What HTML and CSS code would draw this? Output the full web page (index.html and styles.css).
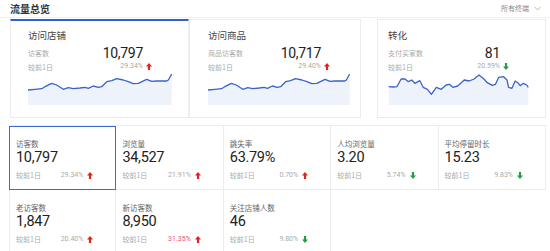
FILE: index.html
```html
<!DOCTYPE html>
<html lang="zh-CN">
<head>
    <meta charset="UTF-8">
    <meta name="viewport" content="width=device-width, initial-scale=1.0">
    <title>流量总览</title>
    <link rel="stylesheet" href="styles.css">
</head>
<body>
    <div class="head">
        <h2 class="head-title">流量总览</h2>
        <span class="head-filter">所有终端
            <svg class="caret" width="7" height="5" viewBox="0 0 7 5"><polyline points="0.5,0.8 3.5,4 6.5,0.8" fill="none" stroke="#bbb" stroke-width="1"/></svg>
        </span>
    </div>

    <div class="overview">
        <div class="card card-first">
            <div class="card-title">访问店铺</div>
            <div class="card-row">
                <span class="card-label">访客数</span>
                <span class="card-value">10,797</span>
                <span class="card-icon"></span>
            </div>
            <div class="card-row card-row-small">
                <span class="card-label">较前1日</span>
                <span class="card-rate">29.34%</span>
                <span class="card-icon"><svg width="6" height="7" viewBox="0 0 6 7"><path d="M3 0L6 3.5H4.1V7H1.9V3.5H0Z" fill="#e2231a"/></svg></span>
            </div>
            <svg class="spark" viewBox="0 0 144 33" preserveAspectRatio="none">
                <path d="M0 18L7 17.3L13.7 16.7L17 14.7L23.7 11.3L28.7 13L35.3 17.3L40.3 15.7L45.3 16.7L52 16L57 15.3L60.3 16.3L65.3 14L70.3 15.3L73.7 14.7L78.7 9.7L83.7 8.7L88.7 6.7L95.3 8L100.3 9.7L105.3 11.7L110.3 11.3L118.7 7.3L123.7 9.3L128.7 9L138.7 9L140.3 8L143.7 2V33H0Z" fill="#eef2fb"/>
                <polyline points="0,18 7,17.3 13.7,16.7 17,14.7 23.7,11.3 28.7,13 35.3,17.3 40.3,15.7 45.3,16.7 52,16 57,15.3 60.3,16.3 65.3,14 70.3,15.3 73.7,14.7 78.7,9.7 83.7,8.7 88.7,6.7 95.3,8 100.3,9.7 105.3,11.7 110.3,11.3 118.7,7.3 123.7,9.3 128.7,9 138.7,9 140.3,8 143.7,2" fill="none" stroke="#3a62c9" stroke-width="1.3" stroke-linejoin="round"/>
            </svg>
        </div>

        <div class="card card-second">
            <div class="card-title">访问商品</div>
            <div class="card-row">
                <span class="card-label">商品访客数</span>
                <span class="card-value">10,717</span>
                <span class="card-icon"></span>
            </div>
            <div class="card-row card-row-small">
                <span class="card-label">较前1日</span>
                <span class="card-rate">29.40%</span>
                <span class="card-icon"><svg width="6" height="7" viewBox="0 0 6 7"><path d="M3 0L6 3.5H4.1V7H1.9V3.5H0Z" fill="#e2231a"/></svg></span>
            </div>
            <svg class="spark" viewBox="0 0 144 33" preserveAspectRatio="none">
                <path d="M0 18L7 17.3L13.7 16.7L17 14.7L23.7 11.3L28.7 13L35.3 17.3L40.3 15.7L45.3 16.7L52 16L57 15.3L60.3 16.3L65.3 14L70.3 15.3L73.7 14.7L78.7 9.7L83.7 8.7L88.7 6.7L95.3 8L100.3 9.7L105.3 11.7L110.3 11.3L118.7 7.3L123.7 9.3L128.7 9L138.7 9L140.3 8L143.7 2V33H0Z" fill="#eef2fb"/>
                <polyline points="0,18 7,17.3 13.7,16.7 17,14.7 23.7,11.3 28.7,13 35.3,17.3 40.3,15.7 45.3,16.7 52,16 57,15.3 60.3,16.3 65.3,14 70.3,15.3 73.7,14.7 78.7,9.7 83.7,8.7 88.7,6.7 95.3,8 100.3,9.7 105.3,11.7 110.3,11.3 118.7,7.3 123.7,9.3 128.7,9 138.7,9 140.3,8 143.7,2" fill="none" stroke="#3a62c9" stroke-width="1.3" stroke-linejoin="round"/>
            </svg>
        </div>

        <div class="card card-third">
            <div class="card-title">转化</div>
            <div class="card-row">
                <span class="card-label">支付买家数</span>
                <span class="card-value">81</span>
                <span class="card-icon"></span>
            </div>
            <div class="card-row card-row-small">
                <span class="card-label">较前1日</span>
                <span class="card-rate">20.59%</span>
                <span class="card-icon"><svg width="6" height="7" viewBox="0 0 6 7"><path d="M3 7L6 3.5H4.1V0H1.9V3.5H0Z" fill="#2a9a48"/></svg></span>
            </div>
            <svg class="spark" viewBox="0 0 143 33" preserveAspectRatio="none">
                <path d="M0.7 14.7L5.7 15L9 14.7L13.3 7L17.3 7L20.7 9.7L24 8L27.3 11.3L32.3 8.7L35.7 15.3L40 17.3L44 22.3L49 15.3L54 17.3L59 13L62.3 12.3L65.7 15.3L70.7 14L77.3 8L82.3 9L87.3 7L92.3 3L97.3 7L100.7 10.7L105.7 13.3L109 12.3L112.3 5.3L117.3 4.7L120.7 8L122.3 15.3L125.7 16.3L129 9L132.3 11.3L134 13.7L137.3 11.3L140.7 13L142.3 15.3V33H0.7Z" fill="#eef2fb"/>
                <polyline points="0.7,14.7 5.7,15 9,14.7 13.3,7 17.3,7 20.7,9.7 24,8 27.3,11.3 32.3,8.7 35.7,15.3 40,17.3 44,22.3 49,15.3 54,17.3 59,13 62.3,12.3 65.7,15.3 70.7,14 77.3,8 82.3,9 87.3,7 92.3,3 97.3,7 100.7,10.7 105.7,13.3 109,12.3 112.3,5.3 117.3,4.7 120.7,8 122.3,15.3 125.7,16.3 129,9 132.3,11.3 134,13.7 137.3,11.3 140.7,13 142.3,15.3" fill="none" stroke="#3a62c9" stroke-width="1.3" stroke-linejoin="round"/>
            </svg>
        </div>
    </div>

    <div class="metrics">
        <div class="metric metric-active">
            <div class="metric-label">访客数</div>
            <div class="metric-value">10,797</div>
            <div class="metric-foot"><span>较前1日</span><span class="metric-rate">29.34% <svg width="6" height="7" viewBox="0 0 6 7"><path d="M3 0L6 3.5H4.1V7H1.9V3.5H0Z" fill="#e2231a"/></svg></span></div>
        </div>
        <div class="metric">
            <div class="metric-label">浏览量</div>
            <div class="metric-value">34,527</div>
            <div class="metric-foot"><span>较前1日</span><span class="metric-rate">21.91% <svg width="6" height="7" viewBox="0 0 6 7"><path d="M3 0L6 3.5H4.1V7H1.9V3.5H0Z" fill="#e2231a"/></svg></span></div>
        </div>
        <div class="metric">
            <div class="metric-label">跳失率</div>
            <div class="metric-value">63.79%</div>
            <div class="metric-foot"><span>较前1日</span><span class="metric-rate">0.70% <svg width="6" height="7" viewBox="0 0 6 7"><path d="M3 0L6 3.5H4.1V7H1.9V3.5H0Z" fill="#e2231a"/></svg></span></div>
        </div>
        <div class="metric">
            <div class="metric-label">人均浏览量</div>
            <div class="metric-value">3.20</div>
            <div class="metric-foot"><span>较前1日</span><span class="metric-rate">5.74% <svg width="6" height="7" viewBox="0 0 6 7"><path d="M3 7L6 3.5H4.1V0H1.9V3.5H0Z" fill="#2a9a48"/></svg></span></div>
        </div>
        <div class="metric">
            <div class="metric-label">平均停留时长</div>
            <div class="metric-value">15.23</div>
            <div class="metric-foot"><span>较前1日</span><span class="metric-rate">9.83% <svg width="6" height="7" viewBox="0 0 6 7"><path d="M3 7L6 3.5H4.1V0H1.9V3.5H0Z" fill="#2a9a48"/></svg></span></div>
        </div>
        <div class="metric">
            <div class="metric-label">老访客数</div>
            <div class="metric-value">1,847</div>
            <div class="metric-foot"><span>较前1日</span><span class="metric-rate">20.40% <svg width="6" height="7" viewBox="0 0 6 7"><path d="M3 0L6 3.5H4.1V7H1.9V3.5H0Z" fill="#e2231a"/></svg></span></div>
        </div>
        <div class="metric">
            <div class="metric-label">新访客数</div>
            <div class="metric-value">8,950</div>
            <div class="metric-foot"><span>较前1日</span><span class="metric-rate metric-rate-hot">31.35% <svg width="6" height="7" viewBox="0 0 6 7"><path d="M3 0L6 3.5H4.1V7H1.9V3.5H0Z" fill="#e2231a"/></svg></span></div>
        </div>
        <div class="metric">
            <div class="metric-label">关注店铺人数</div>
            <div class="metric-value">46</div>
            <div class="metric-foot"><span>较前1日</span><span class="metric-rate">9.80% <svg width="6" height="7" viewBox="0 0 6 7"><path d="M3 7L6 3.5H4.1V0H1.9V3.5H0Z" fill="#2a9a48"/></svg></span></div>
        </div>
    </div>
</body>
</html>
```

FILE: styles.css
```css
body {
    margin: 0;
    width: 550px;
    background: #fff;
    font-family: "Noto Sans CJK SC", "Liberation Sans", sans-serif;
    color: #333;
    overflow: hidden;
}
.head {
    display: flex;
    justify-content: space-between;
    align-items: center;
    height: 17px;
    padding: 0 9px 0 10px;
    border-bottom: 1px solid #f0f0f0;
}
.head-title {
    margin: 0;
    font-size: 10px;
    line-height: 12px;
    font-weight: bold;
    color: #333;
}
.head-filter {
    display: flex;
    align-items: center;
    gap: 5px;
    font-size: 7px;
    line-height: 11px;
    color: #888;
}
.caret {
    display: block;
}

/* top cards */
.overview {
    display: flex;
    margin: 1px 0 0 10px;
}
.card {
    display: flex;
    flex-direction: column;
    border: 1px solid #ececec;
    padding: 8px 16px 12px 17px;
    box-sizing: border-box;
}
.card-first {
    width: 179px;
    border-top: 2px solid #2f5fd0;
}
.card-second {
    width: 172px;
    padding-left: 18px;
    padding-right: 10px;
    padding-top: 9px;
}
.card-third {
    width: 169px;
    margin-left: 16px;
    padding-left: 10px;
    padding-top: 9px;
}
.card-title {
    font-size: 9.5px;
    line-height: 12px;
    color: #444;
    margin-bottom: 4px;
}
.card-row {
    display: flex;
    align-items: center;
    height: 16px;
    padding-right: 20px;
}
.card-row-small {
    height: 11px;
}
.card-label {
    flex: 1;
    font-size: 7px;
    line-height: 10px;
    color: #aaa;
}
.card-value {
    font-family: Roboto, "Noto Sans CJK SC", sans-serif;
    font-size: 14px;
    line-height: 16px;
    letter-spacing: -0.3px;
    color: #222;
}
.card-rate {
    font-family: Roboto, "Noto Sans CJK SC", sans-serif;
    font-size: 7px;
    line-height: 9px;
    color: #aaa;
}
.card-icon {
    display: flex;
    justify-content: flex-end;
    width: 9px;
}
.spark {
    display: block;
    width: 100%;
    height: 33px;
}

/* metric grid */
.metrics {
    display: grid;
    grid-template-columns: repeat(5, 1fr);
    grid-auto-rows: 64px;
    width: 537px;
    margin: 7px 0 0 9px;
    border-top: 1px solid #ececec;
}
.metric {
    padding: 12px 0 0 6px;
    border-right: 1px solid #ececec;
    border-bottom: 1px solid #ececec;
}
.metric:nth-child(5n+1) {
    border-left: 1px solid #ececec;
}
.metric-active {
    outline: 1px solid #3b6bd3;
    outline-offset: -1px;
}
.metric-label {
    font-size: 7.5px;
    line-height: 11px;
    color: #666;
}
.metric-value {
    font-family: Roboto, "Noto Sans CJK SC", sans-serif;
    font-size: 14.5px;
    line-height: 18px;
    letter-spacing: -0.3px;
    color: #222;
}
.metric-foot {
    display: flex;
    justify-content: space-between;
    align-items: center;
    margin-top: 3px;
    padding-right: 22px;
    font-size: 7px;
    line-height: 10px;
    color: #aaa;
}
.metric-rate {
    display: flex;
    align-items: center;
    gap: 4px;
    font-family: Roboto, "Noto Sans CJK SC", sans-serif;
}
.metric-rate-hot {
    color: #f0506e;
}
```
